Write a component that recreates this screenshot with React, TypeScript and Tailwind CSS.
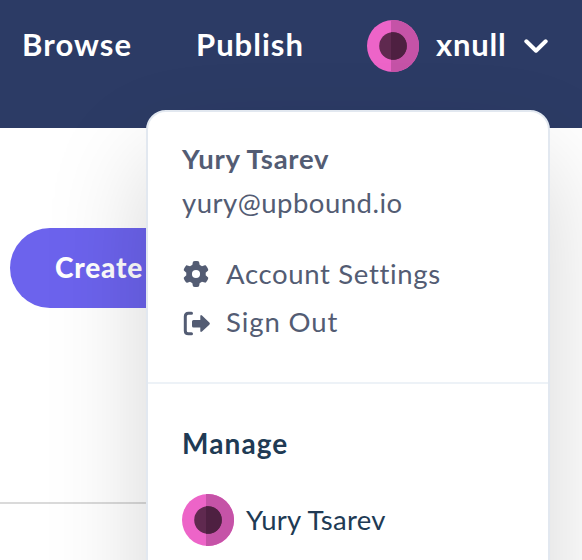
import { FaGear } from "react-icons/fa6";

function Avatar() {
  return (
    <svg viewBox="0 0 52 52" className="size-[52px] shrink-0">
      <circle cx="26" cy="26" r="26" fill="#ed64c8" />
      <path d="M24 .08A26 26 0 1 1 24 51.92Z" fill="#c553a7" />
      <circle cx="26" cy="26" r="13.8" fill="#5f294f" />
      <path d="M24 12.35A13.8 13.8 0 1 1 24 39.65Z" fill="#4e2041" />
    </svg>
  );
}

function SignOutIcon() {
  return (
    <svg viewBox="0 0 28 26" className="mt-1 h-[26px] w-7 shrink-0">
      <path d="M9.5 2.3H6.4Q3.3 2.3 3.3 5.4V19.7Q3.3 22.8 6.4 22.8H9.5" fill="none" stroke="currentColor" strokeWidth="3" strokeLinecap="round" />
      <path d="M11.5 9H18.3V5.2Q18.5 3.4 20 4.5L27.3 11.4Q28.4 12.6 27.3 13.8L20 20.6Q18.5 21.6 18.3 20V16.4H11.5Q10 16.4 10 14.9V10.5Q10 9 11.5 9Z" fill="currentColor" />
    </svg>
  );
}

function UserMenu() {
  return (
    <div className="absolute left-[146px] top-[110px] h-[800px] w-[404px] rounded-[20px] border-2 border-[#e2e8f0] bg-white shadow-[0_50px_100px_rgba(0,0,0,0.17)]">
      <div className="h-[272px] border-b-2 border-[#edf2f7] px-[34px] pt-[25px] text-[#535c73]">
        <div className="h-11 whitespace-nowrap text-[27.5px] leading-11 font-bold tracking-[0.75px]">Yury Tsarev</div>
        <div className="h-11 whitespace-nowrap text-[27.5px] leading-11 tracking-[0.5px]">yury@upbound.io</div>
        <div className="mt-[25px] flex h-12 items-center">
          <FaGear className="ml-px size-[26px] shrink-0" />
          <span className="ml-[17px] whitespace-nowrap text-[27.5px] leading-12 tracking-[0.67px]">Account Settings</span>
        </div>
        <div className="flex h-12 items-center">
          <SignOutIcon />
          <span className="ml-4 whitespace-nowrap text-[27.5px] leading-12 tracking-[0.9px]">Sign Out</span>
        </div>
      </div>
      <div className="px-[34px] pt-[37px] text-[#203a54]">
        <div className="h-11 whitespace-nowrap text-[28px] leading-11 font-bold tracking-[1.1px]">Manage</div>
        <div className="mt-[29px] flex h-[52px] items-center">
          <Avatar />
          <span className="ml-3 whitespace-nowrap text-[27.5px] leading-[52px] tracking-[0.3px]">Yury Tsarev</span>
        </div>
      </div>
    </div>
  );
}

export default function App() {
  return (
    <div className="relative h-[560px] w-[582px] overflow-hidden bg-white font-[Lato,sans-serif]">
      <header className="flex h-32 items-start bg-[#2c3b65] pt-5 pl-[22px] text-[31px] leading-[48px] font-bold text-white">
        <span className="w-[174px] whitespace-nowrap tracking-[1.1px]">Browse</span>
        <span className="w-[171px] whitespace-nowrap tracking-[1px]">Publish</span>
        <Avatar />
        <span className="ml-[17px] w-[88px] whitespace-nowrap tracking-[0.8px]">xnull</span>
        <svg viewBox="0 0 24 16" className="mt-[18px] h-4 w-6 shrink-0" fill="none" stroke="white" strokeWidth="4" strokeLinecap="round" strokeLinejoin="round">
          <path d="M2.3 3.3L12 12.7L21.7 3.3" />
        </svg>
      </header>
      <main className="pt-[100px]">
        <button className="ml-[10px] block h-20 w-[280px] rounded-full bg-[#6c63ed] pl-[45px] text-left text-[28px] leading-[78px] font-black tracking-[0.8px] text-white"><span className="block h-20">Create</span></button>
        <div className="mt-[194px] h-0.5 w-[300px] bg-[#dadada]" />
      </main>
      <UserMenu />
    </div>
  );
}
